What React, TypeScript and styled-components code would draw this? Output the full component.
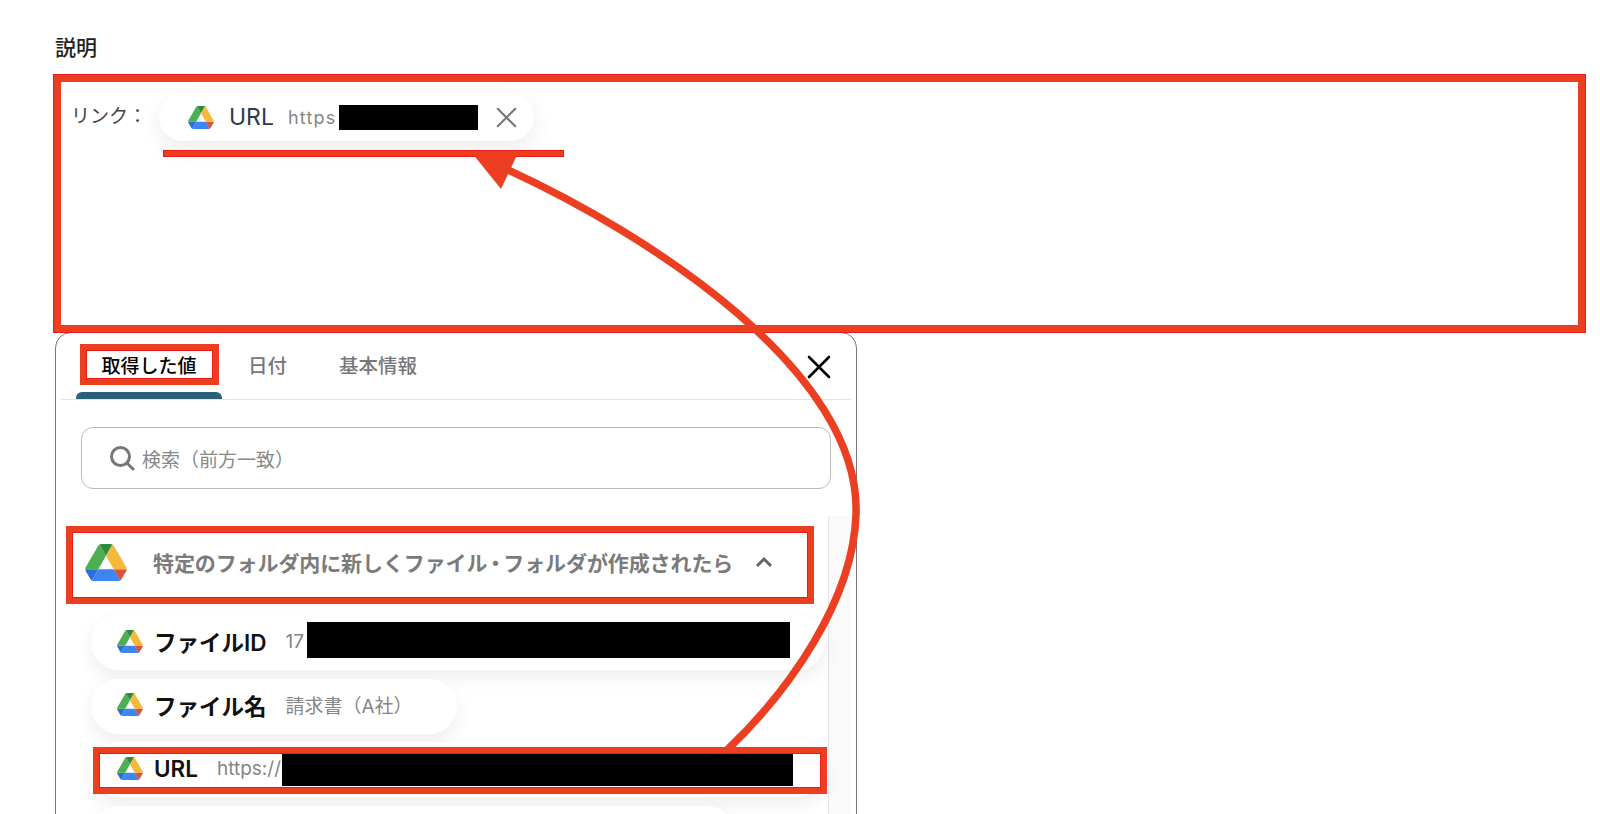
import styled, { createGlobalStyle } from "styled-components";

const RED = "#ec3f22";
const EDGE = "#e81c12";
const FONT = `Inter, "Noto Sans CJK JP", sans-serif`;

const GlobalStyle = createGlobalStyle`
  html, body {
    margin: 0;
    padding: 0;
    background: #fff;
    font-family: ${FONT};
  }
  * {
    box-sizing: border-box;
  }
`;

const Page = styled.div`
  position: relative;
  width: 1600px;
  height: 814px;
  overflow: hidden;
  padding-top: 36px;
`;

const Title = styled.div`
  margin: 0 0 14px 55px;
  height: 24px;
  line-height: 24px;
  font-size: 21px;
  font-weight: 500;
  color: #222;
`;

/* red annotation box drawn by hand on the screenshot */
const DescriptionFrame = styled.div`
  position: relative;
  margin-left: 53px;
  width: 1533px;
  height: 259px;
  border: 8px solid ${RED};
  outline: 1px solid ${EDGE};
  outline-offset: -1px;
  display: flex;
  align-items: flex-start;
  padding: 11px 0 0 10px;
`;

const LinkLabel = styled.span`
  width: 88px;
  flex: none;
  margin-top: 10px;
  font-size: 19px;
  line-height: 28px;
  color: #444;
`;

const Chip = styled.div`
  width: 375px;
  height: 48px;
  display: flex;
  align-items: center;
  padding-left: 29px;
  border-radius: 24px;
  background: #fff;
  box-shadow: 0 8px 22px rgba(0, 0, 0, 0.08);
`;

const ChipName = styled.span`
  margin-left: 15px;
  font-size: 23px;
  color: #2c3a4b;
`;

const ChipValue = styled.span`
  margin-left: 14px;
  font-size: 18px;
  letter-spacing: 1.2px;
  color: #858585;
`;

const ChipMask = styled.div`
  width: 139px;
  height: 25px;
  margin-left: 3px;
  background: #000;
`;

const ChipClose = styled.svg`
  width: 21px;
  height: 21px;
  margin-left: 18px;
  stroke: #777;
  stroke-width: 2.4;
  fill: none;
`;

const Underline = styled.div`
  position: absolute;
  left: 102px;
  top: 68px;
  width: 401px;
  height: 7px;
  background: ${RED};
  outline: 1px solid ${EDGE};
  outline-offset: -1px;
`;

const Panel = styled.div`
  margin: -1px 0 0 55px;
  width: 802px;
  height: 560px;
  padding: 0 5px;
  background: #fff;
  border: 1.5px solid #777;
  border-radius: 16px;
`;

const TabBar = styled.div`
  display: flex;
  align-items: stretch;
  height: 67px;
  padding-left: 15px;
  border-bottom: 1.5px solid #e2e2e2;
`;

const ActiveTab = styled.div`
  width: 146px;
  display: flex;
  flex-direction: column;
  align-items: center;
  padding-top: 11px;
`;

const ActiveLabel = styled.div`
  width: 139px;
  height: 41px;
  display: flex;
  align-items: center;
  justify-content: center;
  border: 7px solid ${RED};
  outline: 1px solid ${EDGE};
  outline-offset: -7px;
  font-size: 19px;
  font-weight: 500;
  color: #000;
`;

const TabMarker = styled.div`
  width: 100%;
  height: 7px;
  margin-top: auto;
  border-radius: 6px 6px 0 0;
  background: #2a6179;
`;

const Tab = styled.div`
  padding: 0 26px 4px;
  display: flex;
  align-items: center;
  font-size: 19.5px;
  font-weight: 500;
  color: #777;
`;

const PanelClose = styled.svg`
  width: 24px;
  height: 24px;
  margin: 22px 20px 0 auto;
  stroke: #000;
  stroke-width: 2.6;
  fill: none;
`;

const SearchBox = styled.div`
  margin: 27px 0 0 20px;
  width: 750px;
  height: 62px;
  display: flex;
  align-items: center;
  gap: 7px;
  padding-left: 27px;
  border: 1.5px solid #bbb;
  border-radius: 12px;
  font-size: 19px;
  color: #888;
`;

const ListArea = styled.div`
  display: flex;
  margin-top: 27px;
  height: 330px;
`;

const ListBody = styled.div`
  flex: 1;
  padding: 10px 0 0 5px;
  display: flex;
  flex-direction: column;
  gap: 8.5px;
`;

const ScrollTrack = styled.div`
  width: 23px;
  flex: none;
  background: #fafafa;
  border-left: 1.5px solid #e6e6e6;
`;

const SectionFrame = styled.div`
  width: 748px;
  height: 78px;
  flex: none;
  margin-bottom: 2.5px;
  display: flex;
  align-items: center;
  padding: 0 0 6px 12px;
  border: 7px solid ${RED};
  outline: 1px solid ${EDGE};
  outline-offset: -7px;
`;

const SectionTitle = styled.span`
  margin-left: 26px;
  font-size: 21px;
  font-weight: 600;
  letter-spacing: -0.1px;
  color: #7b7b7b;
  white-space: nowrap;
`;

const NarrowDot = styled.span`
  margin: 0 -2.5px;
`;

const Chevron = styled.svg`
  width: 18px;
  height: 12px;
  margin-left: 22px;
  stroke: #666;
  stroke-width: 3;
  fill: none;
`;

const Row = styled.div<{ $width?: number }>`
  position: relative;
  flex: none;
  width: ${(p) => p.$width ?? 734}px;
  height: 55px;
  margin-left: 25px;
  display: flex;
  align-items: center;
  padding: 0 0 3px 26px;
  border-radius: 28px;
  background: #fff;
  box-shadow: 0 7px 18px rgba(0, 0, 0, 0.07);
`;

const RowName = styled.span`
  margin-left: 11px;
  font-size: 22.5px;
  font-weight: 600;
  color: #111;
  white-space: nowrap;
`;

const RowValue = styled.span`
  margin-left: 19px;
  font-size: 19px;
  color: #858585;
  white-space: nowrap;
`;

const Mask = styled.div<{ $width: number; $height: number; $shift: number; $left: number }>`
  width: ${(p) => p.$width}px;
  height: ${(p) => p.$height}px;
  margin-left: ${(p) => p.$left}px;
  margin-top: ${(p) => p.$shift}px;
  background: #000;
  flex: none;
`;

const RowFrame = styled.div`
  position: absolute;
  left: 2px;
  right: -2px;
  top: 5px;
  height: 47px;
  border: 7px solid ${RED};
  outline: 1px solid ${EDGE};
  outline-offset: -7px;
`;

const ArrowLayer = styled.svg`
  position: absolute;
  left: 0;
  top: 0;
  pointer-events: none;
`;

const DriveIcon = ({ width, height }: { width: number; height: number }) => (
  <svg width={width} height={height} viewBox="0 0 87.3 78" style={{ flex: "none" }}>
    <path d="m6.6 66.85 3.85 6.65c.8 1.4 1.95 2.5 3.3 3.3l13.75-23.8h-27.5c0 1.55.4 3.1 1.2 4.5z" fill="#2b6fd8" />
    <path d="m43.65 25-13.75-23.8c-1.35.8-2.5 1.9-3.3 3.3l-25.4 44a9.06 9.06 0 0 0 -1.2 4.5h27.5z" fill="#4caf50" />
    <path d="m73.55 76.8c1.35-.8 2.5-1.9 3.3-3.3l1.6-2.75 7.65-13.25c.8-1.4 1.2-2.95 1.2-4.5h-27.502l5.852 11.5z" fill="#d9533f" />
    <path d="m43.65 25 13.75-23.8c-1.35-.8-2.9-1.2-4.5-1.2h-18.5c-1.6 0-3.15.45-4.5 1.2z" fill="#2f8a3c" />
    <path d="m59.8 53h-32.3l-13.75 23.8c1.35.8 2.9 1.2 4.5 1.2h50.8c1.6 0 3.15-.45 4.5-1.2z" fill="#3d86f0" />
    <path d="m73.4 26.5-12.7-22c-.8-1.4-1.95-2.5-3.3-3.3l-13.75 23.8 16.15 28h27.45c0-1.55-.4-3.1-1.2-4.5z" fill="#f6b93b" />
  </svg>
);

const Cross = () => <path d="M2 2 L22 22 M22 2 L2 22" strokeLinecap="round" />;

const App = () => {
  return (
    <Page>
      <GlobalStyle />
      <Title>説明</Title>
      <DescriptionFrame>
        <LinkLabel>リンク：</LinkLabel>
        <Chip>
          <DriveIcon width={26} height={23} />
          <ChipName>URL</ChipName>
          <ChipValue>https</ChipValue>
          <ChipMask />
          <ChipClose viewBox="0 0 24 24">
            <Cross />
          </ChipClose>
        </Chip>
        <Underline />
      </DescriptionFrame>

      <Panel>
        <TabBar>
          <ActiveTab>
            <ActiveLabel>取得した値</ActiveLabel>
            <TabMarker />
          </ActiveTab>
          <Tab>日付</Tab>
          <Tab>基本情報</Tab>
          <PanelClose viewBox="0 0 24 24">
            <Cross />
          </PanelClose>
        </TabBar>

        <SearchBox>
          <svg width="26" height="26" viewBox="0 0 26 26" fill="none" stroke="#777" strokeWidth="3" strokeLinecap="round">
            <circle cx="11.5" cy="11.5" r="9" />
            <path d="M18.2 18.2 L24 24" />
          </svg>
          検索（前方一致）
        </SearchBox>

        <ListArea>
          <ListBody>
            <SectionFrame>
              <DriveIcon width={42} height={37} />
              <SectionTitle>
                特定のフォルダ内に新しくファイル<NarrowDot>・</NarrowDot>フォルダが作成されたら
              </SectionTitle>
              <Chevron viewBox="0 0 18 12">
                <path d="M2 10 L9 3 L16 10" />
              </Chevron>
            </SectionFrame>
            <Row>
              <DriveIcon width={26} height={23} />
              <RowName>ファイルID</RowName>
              <RowValue>17</RowValue>
              <Mask $width={483} $height={36} $shift={-2} $left={3} />
            </Row>
            <Row $width={366}>
              <DriveIcon width={26} height={23} />
              <RowName>ファイル名</RowName>
              <RowValue>請求書（A社）</RowValue>
            </Row>
            <Row>
              <DriveIcon width={26} height={23} />
              <RowName>URL</RowName>
              <RowValue>https://</RowValue>
              <Mask $width={511} $height={32} $shift={3} $left={1} />
              <RowFrame />
            </Row>
            <Row $width={644} />
          </ListBody>
          <ScrollTrack />
        </ListArea>
      </Panel>

      <ArrowLayer width="1600" height="814" viewBox="0 0 1600 814">
        <path d="M506 169 C650 235 862 372 856 515 C853 600 790 690 727 750" fill="none" stroke={RED} strokeWidth="7.5" />
        <polygon points="472,153 518,153 501,189" fill={RED} />
      </ArrowLayer>
    </Page>
  );
};

export default App;
